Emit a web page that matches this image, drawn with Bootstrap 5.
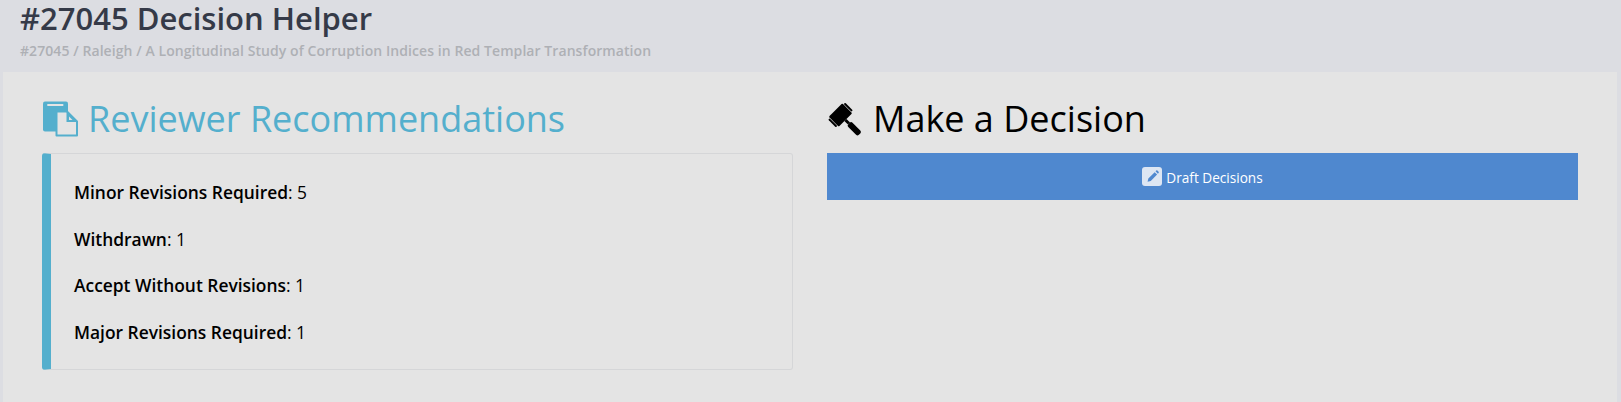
<!DOCTYPE html>
<html lang="en">
<head>
<meta charset="utf-8">
<title>Decision Helper</title>
<link rel="stylesheet" href="https://cdn.jsdelivr.net/npm/bootstrap@5.3.0/dist/css/bootstrap.min.css">
<style>
html,body{height:100%;overflow:hidden}
body{background:#dcdde2;font-family:"Open Sans",sans-serif;color:#000;font-size:16px}
.page-top{height:72px;padding:0 0 0 20px}
.page-title{font-size:31px;line-height:36px;font-weight:550;color:#353a48;margin:0}
.page-sub{font-size:14px;line-height:20px;font-weight:600;color:#aeb0b5;margin:0;padding-top:5px;letter-spacing:.07px}
.work-panel{background:#e4e4e4;margin:0 4px 0 3px;padding:27px 39px 0;height:330px}
.work-row{column-gap:34px}
.work-col{width:751px;flex:none}
.col-head{font-size:36px;line-height:40px;font-weight:400;margin:0 0 14px;height:40px;gap:10px}
.col-head.info{color:#54afcd}
.col-head svg{flex:none}
.rec-card{height:217px;border:1px solid #d5d6d8;border-left:9px solid #54afcd;border-radius:3px;padding:26px 23px 0;background:transparent}
.rec-line{font-size:17.400px;line-height:24px;margin:0 0 22.500px;font-weight:400}
.rec-line b{font-weight:600}
.draft-btn{background:#4f88cf;color:#fff;height:47px;border:0;border-radius:0;font-size:13.6px;gap:4px;width:751px;padding-top:9px}
.draft-btn:hover{background:#4f88cf;color:#fff}
.pen-box{width:20px;height:19px;background:#dde6f3;border-radius:3px;margin-top:-4px}
</style>
</head>
<body>
<header class="page-top">
<h1 class="page-title">#27045 Decision Helper</h1>
<p class="page-sub">#27045 / Raleigh / A Longitudinal Study of Corruption Indices in Red Templar Transformation</p>
</header>
<main class="work-panel">
<div class="d-flex work-row">
<section class="work-col">
<h2 class="col-head info d-flex align-items-center">
<svg width="36" height="36" viewBox="0 0 36 36" aria-hidden="true"><rect x="1" y="0.500" width="25" height="30" rx="2" fill="#54afcd"/><rect x="5.300" y="3" width="16" height="2" fill="#e4e4e4"/><path fill="#e4e4e4" stroke="#54afcd" stroke-width="2" stroke-linejoin="round" d="M14.500 10.500H25L35 20.500V34.500H14.500z"/><path fill="#54afcd" d="M24.500 10.500L35 21H24.500z"/><path fill="#e4e4e4" d="M27 15.500L30.500 19H27z"/></svg>
<span>Reviewer Recommendations</span></h2>
<div class="rec-card">
<p class="rec-line"><b>Minor Revisions Required</b>: 5</p>
<p class="rec-line"><b>Withdrawn</b>: 1</p>
<p class="rec-line"><b>Accept Without Revisions</b>: 1</p>
<p class="rec-line"><b>Major Revisions Required</b>: 1</p>
</div>
</section>
<section class="work-col">
<h2 class="col-head d-flex align-items-center">
<svg width="36" height="36" viewBox="0 0 36 36" aria-hidden="true"><g fill="#000" transform="translate(13.500 14) rotate(-45)"><rect x="-9.500" y="-7" width="19" height="14" rx="1"/><rect x="-12" y="-5.500" width="2" height="11" rx="1"/><rect x="10" y="-5.500" width="2" height="11" rx="1"/><rect x="-1.500" y="7" width="3" height="5"/><rect x="-3" y="12" width="6" height="15" rx="2"/></g></svg>
<span>Make a Decision</span></h2>
<button type="button" class="btn draft-btn d-flex align-items-center justify-content-center">
<span class="pen-box d-inline-flex align-items-center justify-content-center"><svg width="13" height="13" viewBox="0 0 15 15" aria-hidden="true"><path fill="#4f88cf" d="M10 2.500l2.800 2.800-7.300 7.300-3.700 1 .9-3.800zM11 1.500l.8-.8a1 1 0 0 1 1.400 0l1.300 1.300a1 1 0 0 1 0 1.400l-.8.900z"/></svg></span>
<span>Draft Decisions</span></button>
</section>
</div>
</main>
<script src="https://cdn.jsdelivr.net/npm/bootstrap@5.3.0/dist/js/bootstrap.bundle.min.js"></script>
</body>
</html>
